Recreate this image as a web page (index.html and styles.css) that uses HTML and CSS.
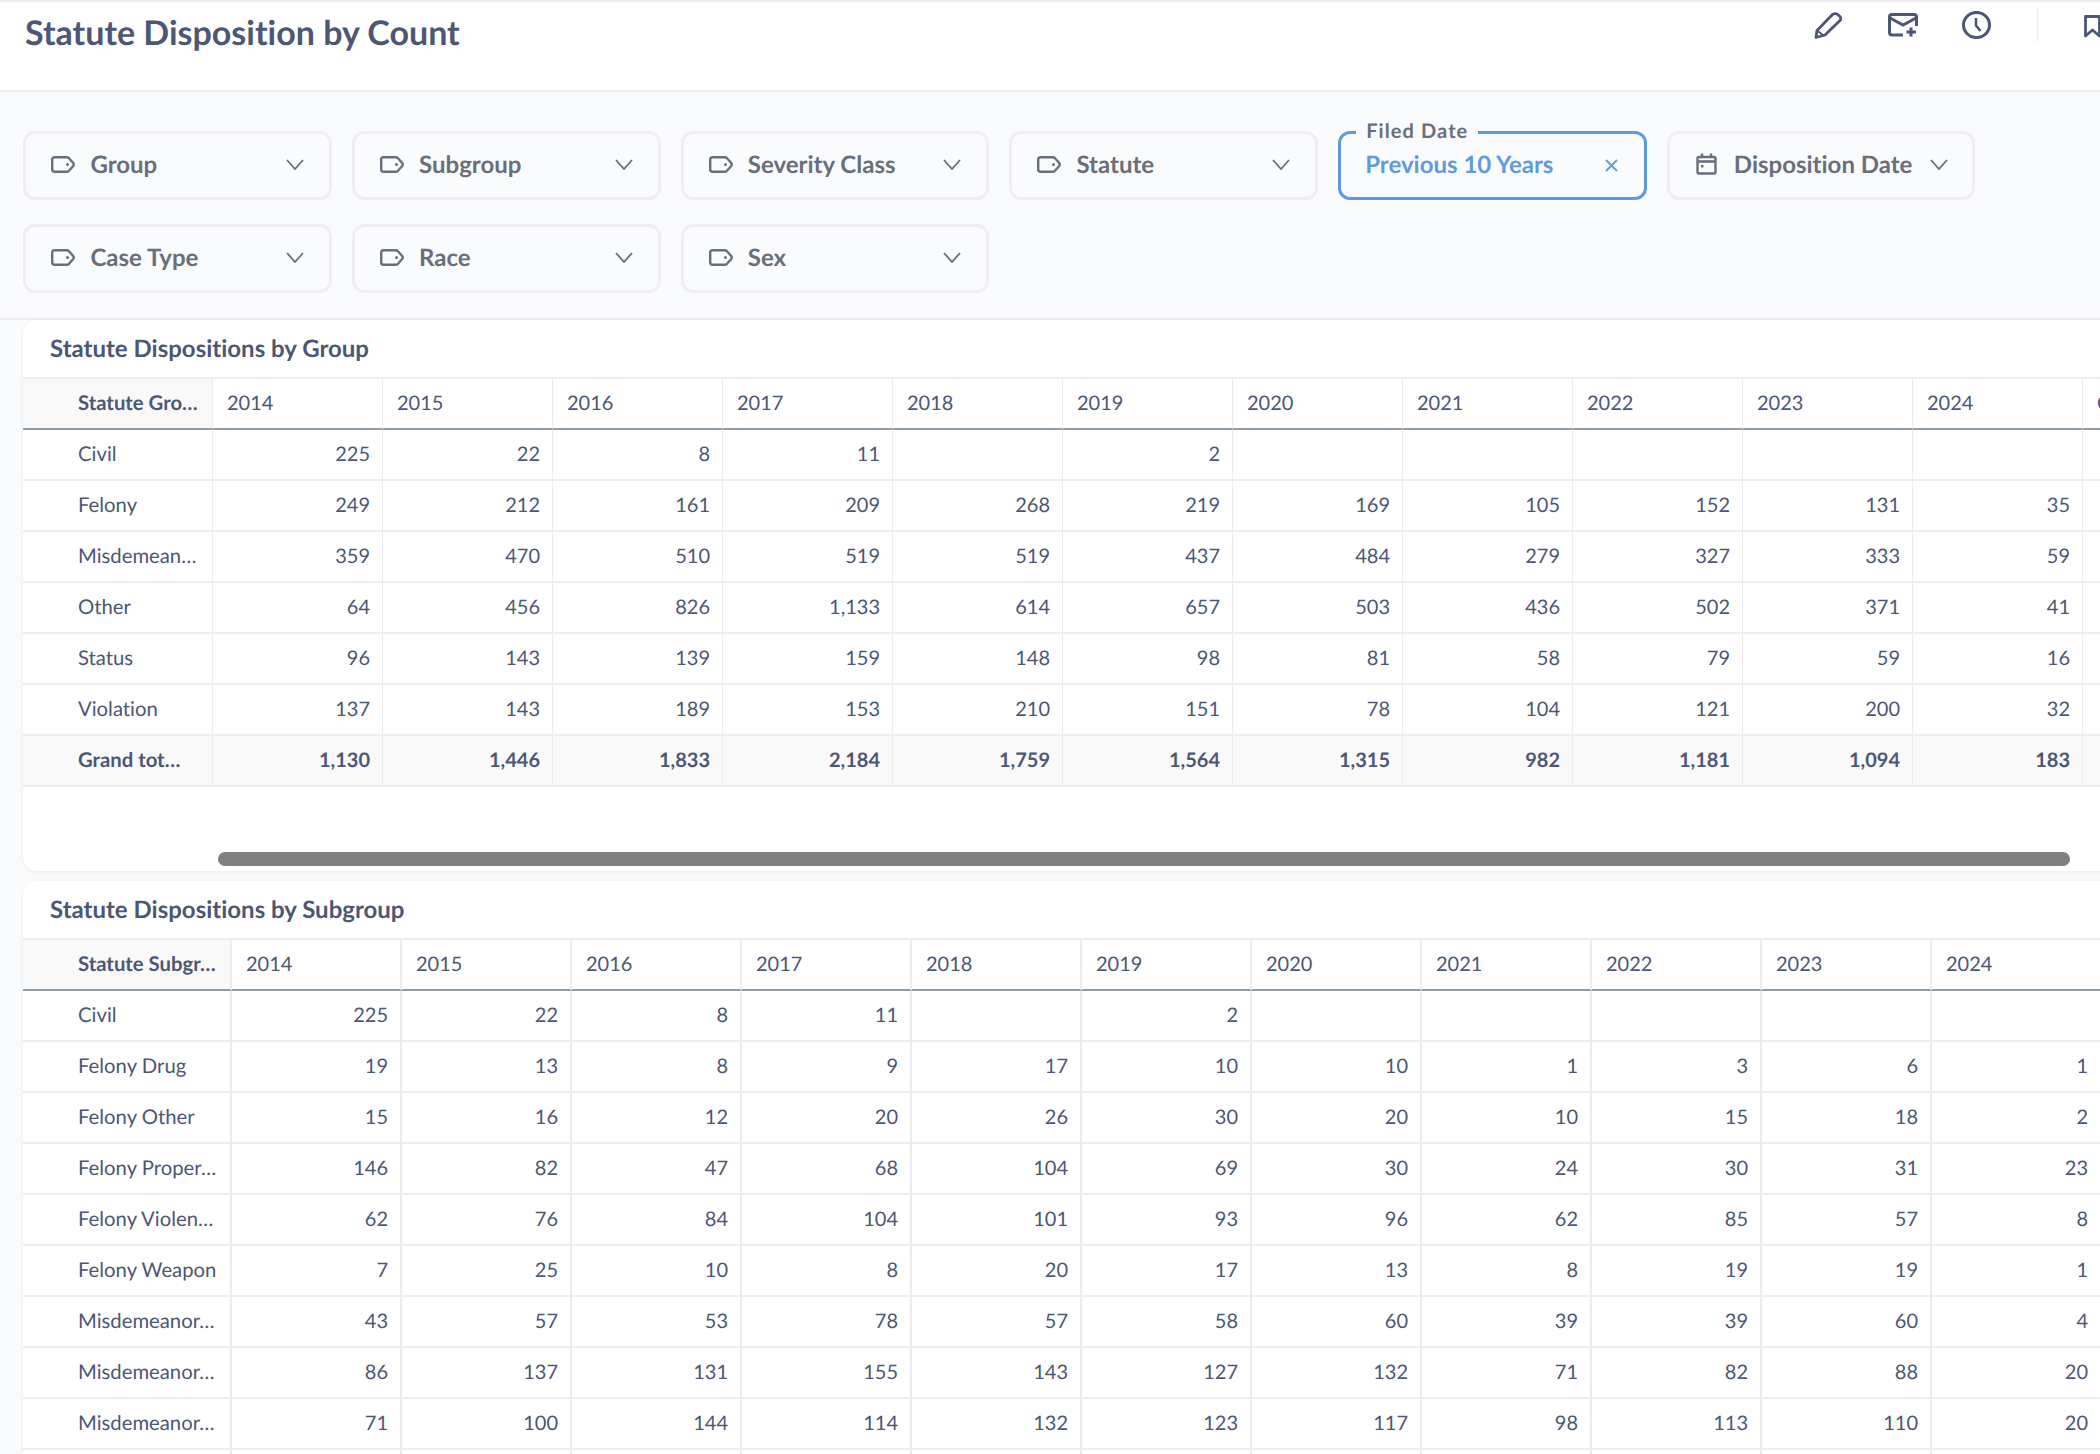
FILE: index.html
```html
<!DOCTYPE html>
<html lang="en">
<head>
<meta charset="utf-8">
<title>Statute Disposition by Count</title>
<link rel="stylesheet" href="styles.css">
</head>
<body>
<svg class="sprite" width="0" height="0" aria-hidden="true">
  <symbol id="tag" viewBox="0 0 24 17"><path d="M3.5 1.2H15.5Q17 1.2 18 2.2L22.2 7Q23.3 8.5 22.2 10L18 14.8Q17 15.8 15.5 15.8H3.5Q1.2 15.8 1.2 13.5V3.5Q1.2 1.2 3.5 1.2Z" fill="none" stroke="currentColor" stroke-width="2.4"/><circle cx="16.5" cy="8.5" r="1.5" fill="currentColor"/></symbol>
  <symbol id="chev" viewBox="0 0 18 11"><path d="M1 1L9 10L17 1" fill="none" stroke="currentColor" stroke-width="1.8"/></symbol>
</svg>
<header class="topbar">
  <h1 class="page-title">Statute Disposition by Count</h1>
  <div class="actions">
    <svg class="ic ic-pencil" viewBox="0 0 29 27"><path d="M2 25.5L3 18.5L18.5 2.5Q21 .8 24 2.6Q27.5 5 26.5 8L11 23Z" fill="none" stroke="currentColor" stroke-width="2.8" stroke-linejoin="round"/><path d="M3 18.5L9 23" stroke="currentColor" stroke-width="2"/></svg>
    <svg class="ic ic-mail" viewBox="0 0 30 24"><path d="M15 22H4Q1.500 22 1.500 19.500V4Q1.500 1.500 4 1.500H26Q28.500 1.500 28.500 4V13" fill="none" stroke="currentColor" stroke-width="3"/><path d="M2 5L15 12L28 5" fill="none" stroke="currentColor" stroke-width="3"/><path d="M23 14.500V23.500M18.500 19H28" stroke="currentColor" stroke-width="3"/></svg>
    <svg class="ic ic-clock" viewBox="0 0 29 28"><ellipse cx="14.500" cy="14" rx="13" ry="12.600" fill="none" stroke="currentColor" stroke-width="3"/><path d="M14 7V14.500L18.500 20" fill="none" stroke="currentColor" stroke-width="2.600"/></svg>
    <span class="divider"></span>
    <svg class="ic ic-book" viewBox="0 0 17 23"><path d="M1.500 1.500H15.500V21L8.500 15L1.500 21Z" fill="none" stroke="currentColor" stroke-width="2.800" stroke-linejoin="round"/></svg>
  </div>
</header>

<section class="filters">
  <div class="chip"><svg class="i-tag"><use href="#tag"/></svg><span class="chip-text">Group</span><svg class="i-chev"><use href="#chev"/></svg></div>
  <div class="chip"><svg class="i-tag"><use href="#tag"/></svg><span class="chip-text">Subgroup</span><svg class="i-chev"><use href="#chev"/></svg></div>
  <div class="chip"><svg class="i-tag"><use href="#tag"/></svg><span class="chip-text">Severity Class</span><svg class="i-chev"><use href="#chev"/></svg></div>
  <div class="chip"><svg class="i-tag"><use href="#tag"/></svg><span class="chip-text">Statute</span><svg class="i-chev"><use href="#chev"/></svg></div>
  <div class="chip chip-active">
    <span class="chip-legend">Filed Date</span>
    <span class="chip-text">Previous 10 Years</span>
    <svg class="i-x" viewBox="0 0 13 13"><path d="M1 1L12 12M12 1L1 12" fill="none" stroke="currentColor" stroke-width="1.800"/></svg>
  </div>
  <div class="chip chip-date">
    <svg class="i-cal" viewBox="0 0 21 22"><path d="M3 4H18Q19.500 4 19.500 5.500V19Q19.500 20.500 18 20.500H3Q1.500 20.500 1.500 19V5.500Q1.500 4 3 4Z" fill="none" stroke="currentColor" stroke-width="2.400"/><path d="M2 8.500H19" stroke="currentColor" stroke-width="2.600"/><path d="M6 .5V4M15 .5V4" stroke="currentColor" stroke-width="2.400"/><rect x="5" y="12" width="2.500" height="2.500" fill="currentColor"/></svg>
    <span class="chip-text">Disposition Date</span><svg class="i-chev"><use href="#chev"/></svg>
  </div>
  <div class="chip"><svg class="i-tag"><use href="#tag"/></svg><span class="chip-text">Case Type</span><svg class="i-chev"><use href="#chev"/></svg></div>
  <div class="chip"><svg class="i-tag"><use href="#tag"/></svg><span class="chip-text">Race</span><svg class="i-chev"><use href="#chev"/></svg></div>
  <div class="chip"><svg class="i-tag"><use href="#tag"/></svg><span class="chip-text">Sex</span><svg class="i-chev"><use href="#chev"/></svg></div>
</section>

<main class="cards">
  <article class="card">
    <h2 class="card-title">Statute Dispositions by Group</h2>
    <table class="pivot pivot-group">
      <thead><tr><th class="name">Statute Gro…</th><th>2014</th><th>2015</th><th>2016</th><th>2017</th><th>2018</th><th>2019</th><th>2020</th><th>2021</th><th>2022</th><th>2023</th><th>2024</th><th>Grand totals</th></tr></thead>
      <tbody>
        <tr><td class="name">Civil</td><td>225</td><td>22</td><td>8</td><td>11</td><td></td><td>2</td><td></td><td></td><td></td><td></td><td></td><td></td></tr>
        <tr><td class="name">Felony</td><td>249</td><td>212</td><td>161</td><td>209</td><td>268</td><td>219</td><td>169</td><td>105</td><td>152</td><td>131</td><td>35</td><td></td></tr>
        <tr><td class="name">Misdemean…</td><td>359</td><td>470</td><td>510</td><td>519</td><td>519</td><td>437</td><td>484</td><td>279</td><td>327</td><td>333</td><td>59</td><td></td></tr>
        <tr><td class="name">Other</td><td>64</td><td>456</td><td>826</td><td>1,133</td><td>614</td><td>657</td><td>503</td><td>436</td><td>502</td><td>371</td><td>41</td><td></td></tr>
        <tr><td class="name">Status</td><td>96</td><td>143</td><td>139</td><td>159</td><td>148</td><td>98</td><td>81</td><td>58</td><td>79</td><td>59</td><td>16</td><td></td></tr>
        <tr><td class="name">Violation</td><td>137</td><td>143</td><td>189</td><td>153</td><td>210</td><td>151</td><td>78</td><td>104</td><td>121</td><td>200</td><td>32</td><td></td></tr>
        <tr class="total"><td class="name">Grand tot…</td><td>1,130</td><td>1,446</td><td>1,833</td><td>2,184</td><td>1,759</td><td>1,564</td><td>1,315</td><td>982</td><td>1,181</td><td>1,094</td><td>183</td><td></td></tr>
      </tbody>
    </table>
    <div class="scroll-thumb"></div>
  </article>

  <article class="card">
    <h2 class="card-title">Statute Dispositions by Subgroup</h2>
    <table class="pivot pivot-subgroup">
      <thead><tr><th class="name">Statute Subgr…</th><th>2014</th><th>2015</th><th>2016</th><th>2017</th><th>2018</th><th>2019</th><th>2020</th><th>2021</th><th>2022</th><th>2023</th><th>2024</th></tr></thead>
      <tbody>
        <tr><td class="name">Civil</td><td>225</td><td>22</td><td>8</td><td>11</td><td></td><td>2</td><td></td><td></td><td></td><td></td><td></td></tr>
        <tr><td class="name">Felony Drug</td><td>19</td><td>13</td><td>8</td><td>9</td><td>17</td><td>10</td><td>10</td><td>1</td><td>3</td><td>6</td><td>1</td></tr>
        <tr><td class="name">Felony Other</td><td>15</td><td>16</td><td>12</td><td>20</td><td>26</td><td>30</td><td>20</td><td>10</td><td>15</td><td>18</td><td>2</td></tr>
        <tr><td class="name">Felony Proper…</td><td>146</td><td>82</td><td>47</td><td>68</td><td>104</td><td>69</td><td>30</td><td>24</td><td>30</td><td>31</td><td>23</td></tr>
        <tr><td class="name">Felony Violen…</td><td>62</td><td>76</td><td>84</td><td>104</td><td>101</td><td>93</td><td>96</td><td>62</td><td>85</td><td>57</td><td>8</td></tr>
        <tr><td class="name">Felony Weapon</td><td>7</td><td>25</td><td>10</td><td>8</td><td>20</td><td>17</td><td>13</td><td>8</td><td>19</td><td>19</td><td>1</td></tr>
        <tr><td class="name">Misdemeanor…</td><td>43</td><td>57</td><td>53</td><td>78</td><td>57</td><td>58</td><td>60</td><td>39</td><td>39</td><td>60</td><td>4</td></tr>
        <tr><td class="name">Misdemeanor…</td><td>86</td><td>137</td><td>131</td><td>155</td><td>143</td><td>127</td><td>132</td><td>71</td><td>82</td><td>88</td><td>20</td></tr>
        <tr><td class="name">Misdemeanor…</td><td>71</td><td>100</td><td>144</td><td>114</td><td>132</td><td>123</td><td>117</td><td>98</td><td>113</td><td>110</td><td>20</td></tr>
        <tr><td class="name"></td><td></td><td></td><td></td><td></td><td></td><td></td><td></td><td></td><td></td><td></td><td></td></tr>
      </tbody>
    </table>
  </article>
</main>
</body>
</html>
```
FILE: styles.css
```css
* { box-sizing: border-box; }
html, body { margin: 0; height: 1454px; overflow: hidden; }
body {
  background: #f9fbfc;
  color: #4c5773;
  font-family: Lato, "Liberation Sans", sans-serif;
  font-variant-ligatures: none;
  text-rendering: geometricPrecision;
}
.sprite { position: absolute; }

.topbar {
  height: 92px;
  background: #fff;
  border-top: 2px solid #eeeeef;
  border-bottom: 2px solid #eeecee;
  padding-left: 25px;
  display: flex;
  justify-content: space-between;
  align-items: flex-start;
  overflow: hidden;
}
.page-title {
  margin: 11px 0 0;
  font-size: 34px;
  line-height: 40px;
  font-weight: 700;
}
.actions {
  display: flex;
  align-items: flex-start;
  margin-right: -1px;
  flex: none;
}
.ic { display: block; color: #4c5773; flex: none; }
.ic-pencil { width: 29px; height: 27px; margin-top: 10px; }
.ic-mail { width: 30px; height: 24px; margin: 11px 0 0 45px; }
.ic-clock { width: 29px; height: 28px; margin: 9px 0 0 44px; }
.divider { width: 1px; height: 34px; margin: 6px 0 0 46px; background: #eeeeef; flex: none; }
.ic-book { width: 17px; height: 23px; margin: 13px 0 0 46px; }

.filters {
  display: flex;
  flex-wrap: wrap;
  gap: 24px 20.2px;
  padding: 39px 0 25px 23.4px;
  border-bottom: 2px solid #eeecee;
}
.chip {
  position: relative;
  width: 308.5px;
  height: 69px;
  border: 3px solid #efeef0;
  border-radius: 12px;
  padding: 0 25px;
  display: flex;
  align-items: center;
  color: #696e7b;
  font-size: 24px;
  font-weight: 700;
}
.chip-text { flex: 1; white-space: nowrap; margin-top: -2px; }
.i-tag { width: 24px; height: 17px; margin-right: 15px; flex: none; margin-top: -2px; }
.i-chev { width: 18px; height: 11px; flex: none; margin-top: -2px; }
.chip-active {
  border-color: #5e9bdc;
  color: #5e9bdc;
  padding: 0 26px 0 24px;
}
.chip-legend {
  position: absolute;
  left: 15px;
  top: -11px;
  padding: 0 10px;
  background: #f9fbfc;
  color: #696e7b;
  font-size: 20px;
  line-height: 17px;
  letter-spacing: 1.1px;
}
.i-x { width: 13px; height: 13px; flex: none; margin-right: 0; }
.chip-date { padding: 0 24px 0 26px; }
.chip-date .chip-text { margin-left: 17px; }
.i-cal { width: 21px; height: 22px; flex: none; margin-top: -4px; }

.cards { padding-left: 23px; }
.card {
  width: 2120px;
  background: #fff;
  border-radius: 14px 0 0 14px;
  box-shadow: 0 1px 4px rgba(0, 0, 0, .08);
  overflow: hidden;
  margin-bottom: 10px;
}
.card-title {
  margin: 0;
  height: 57px;
  padding-left: 27px;
  font-size: 24px;
  line-height: 57px;
  font-weight: 700;
  white-space: nowrap;
}
.pivot {
  table-layout: fixed;
  border-collapse: separate;
  border-spacing: 0;
  border-top: 2px solid #eeeeef;
  font-size: 20px;
}
.pivot-group { width: 2230px; --line: 1px; }
.pivot-subgroup { width: 2079px; --line: 2px; }
.pivot th, .pivot td {
  width: 170px;
  height: 51px;
  padding: 0 12px 2px 14px;
  border-right: var(--line) solid #ececed;
  border-bottom: 2px solid #eeeeef;
  white-space: nowrap;
  overflow: hidden;
  text-align: right;
  font-weight: 400;
}
.pivot th { text-align: left; border-bottom: 2px solid #8f9ba5; }
.pivot .name { text-align: left; padding: 0 0 2px 55px; font-size: 20.3px; }
.pivot-group .name { width: 190px; }
.pivot-subgroup .name { width: 209px; }
.pivot th.name { font-weight: 700; background: #f9f9fa; }
.total td { font-weight: 700; background: #f9f9fa; }
.scroll-thumb {
  width: 1852px;
  height: 14px;
  margin: 65px 0 5px 195px;
  background: #808080;
  border-radius: 7px;
}
```
